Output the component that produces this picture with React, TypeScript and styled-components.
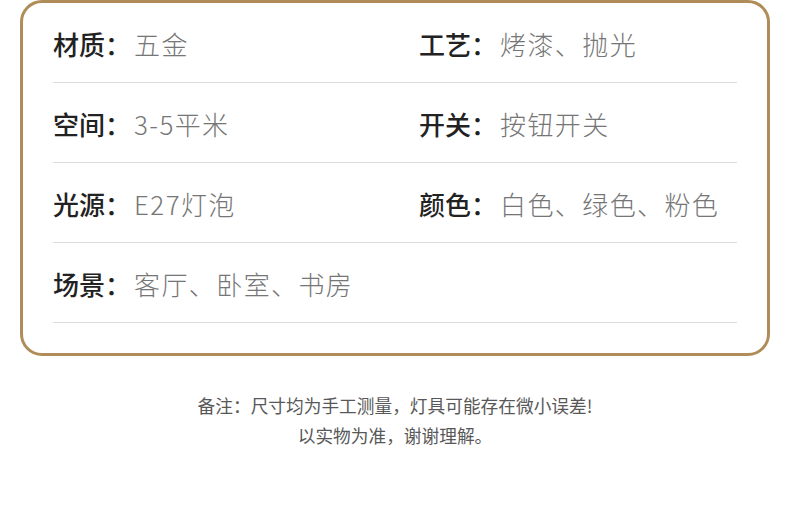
import React from "react";
import styled, { createGlobalStyle } from "styled-components";

const Global = createGlobalStyle`
  html, body { margin: 0; padding: 0; background: #ffffff; }
  body { font-family: "Noto Sans CJK SC", "Noto Sans", sans-serif; }
`;

const Page = styled.div`
  width: 790px;
  height: 531px;
  display: flex;
  flex-direction: column;
  align-items: center;
`;

const Card = styled.div`
  box-sizing: border-box;
  width: 750px;
  height: 356px;
  border: 3px solid #b08c58;
  border-radius: 22px;
  padding: 0 30px 30px;
  display: grid;
  grid-template-columns: 366px 1fr;
  grid-auto-rows: 80px;
`;

const Cell = styled.div`
  box-sizing: border-box;
  border-bottom: 1px solid #dcdcdc;
  display: flex;
  align-items: center;
  padding-top: 2px;
  font-size: 26px;
  white-space: nowrap;
`;

const Label = styled.span`
  color: #222222;
  font-weight: 500;
`;

const Value = styled.span`
  margin-left: 3px;
  color: #767676;
  font-weight: 300;
  letter-spacing: 1.4px;
`;

const Notes = styled.div`
  margin-top: 34px;
  text-align: center;
  font-size: 17.7px;
  line-height: 30px;
  color: #585858;
  font-weight: 400;
`;

const specs: Array<[string, string] | null> = [
  ["材质", "五金"],
  ["工艺", "烤漆、抛光"],
  ["空间", "3-5平米"],
  ["开关", "按钮开关"],
  ["光源", "E27灯泡"],
  ["颜色", "白色、绿色、粉色"],
  ["场景", "客厅、卧室、书房"],
  null,
];

export default function App() {
  return (
    <Page>
      <Global />
      <Card>
        {specs.map((s, i) => (
          <Cell key={i}>
            {s && (
              <>
                <Label>{s[0]}：</Label>
                <Value>{s[1]}</Value>
              </>
            )}
          </Cell>
        ))}
      </Card>
      <Notes>
        <div>备注：尺寸均为手工测量，灯具可能存在微小误差!</div>
        <div>以实物为准，谢谢理解。</div>
      </Notes>
    </Page>
  );
}
